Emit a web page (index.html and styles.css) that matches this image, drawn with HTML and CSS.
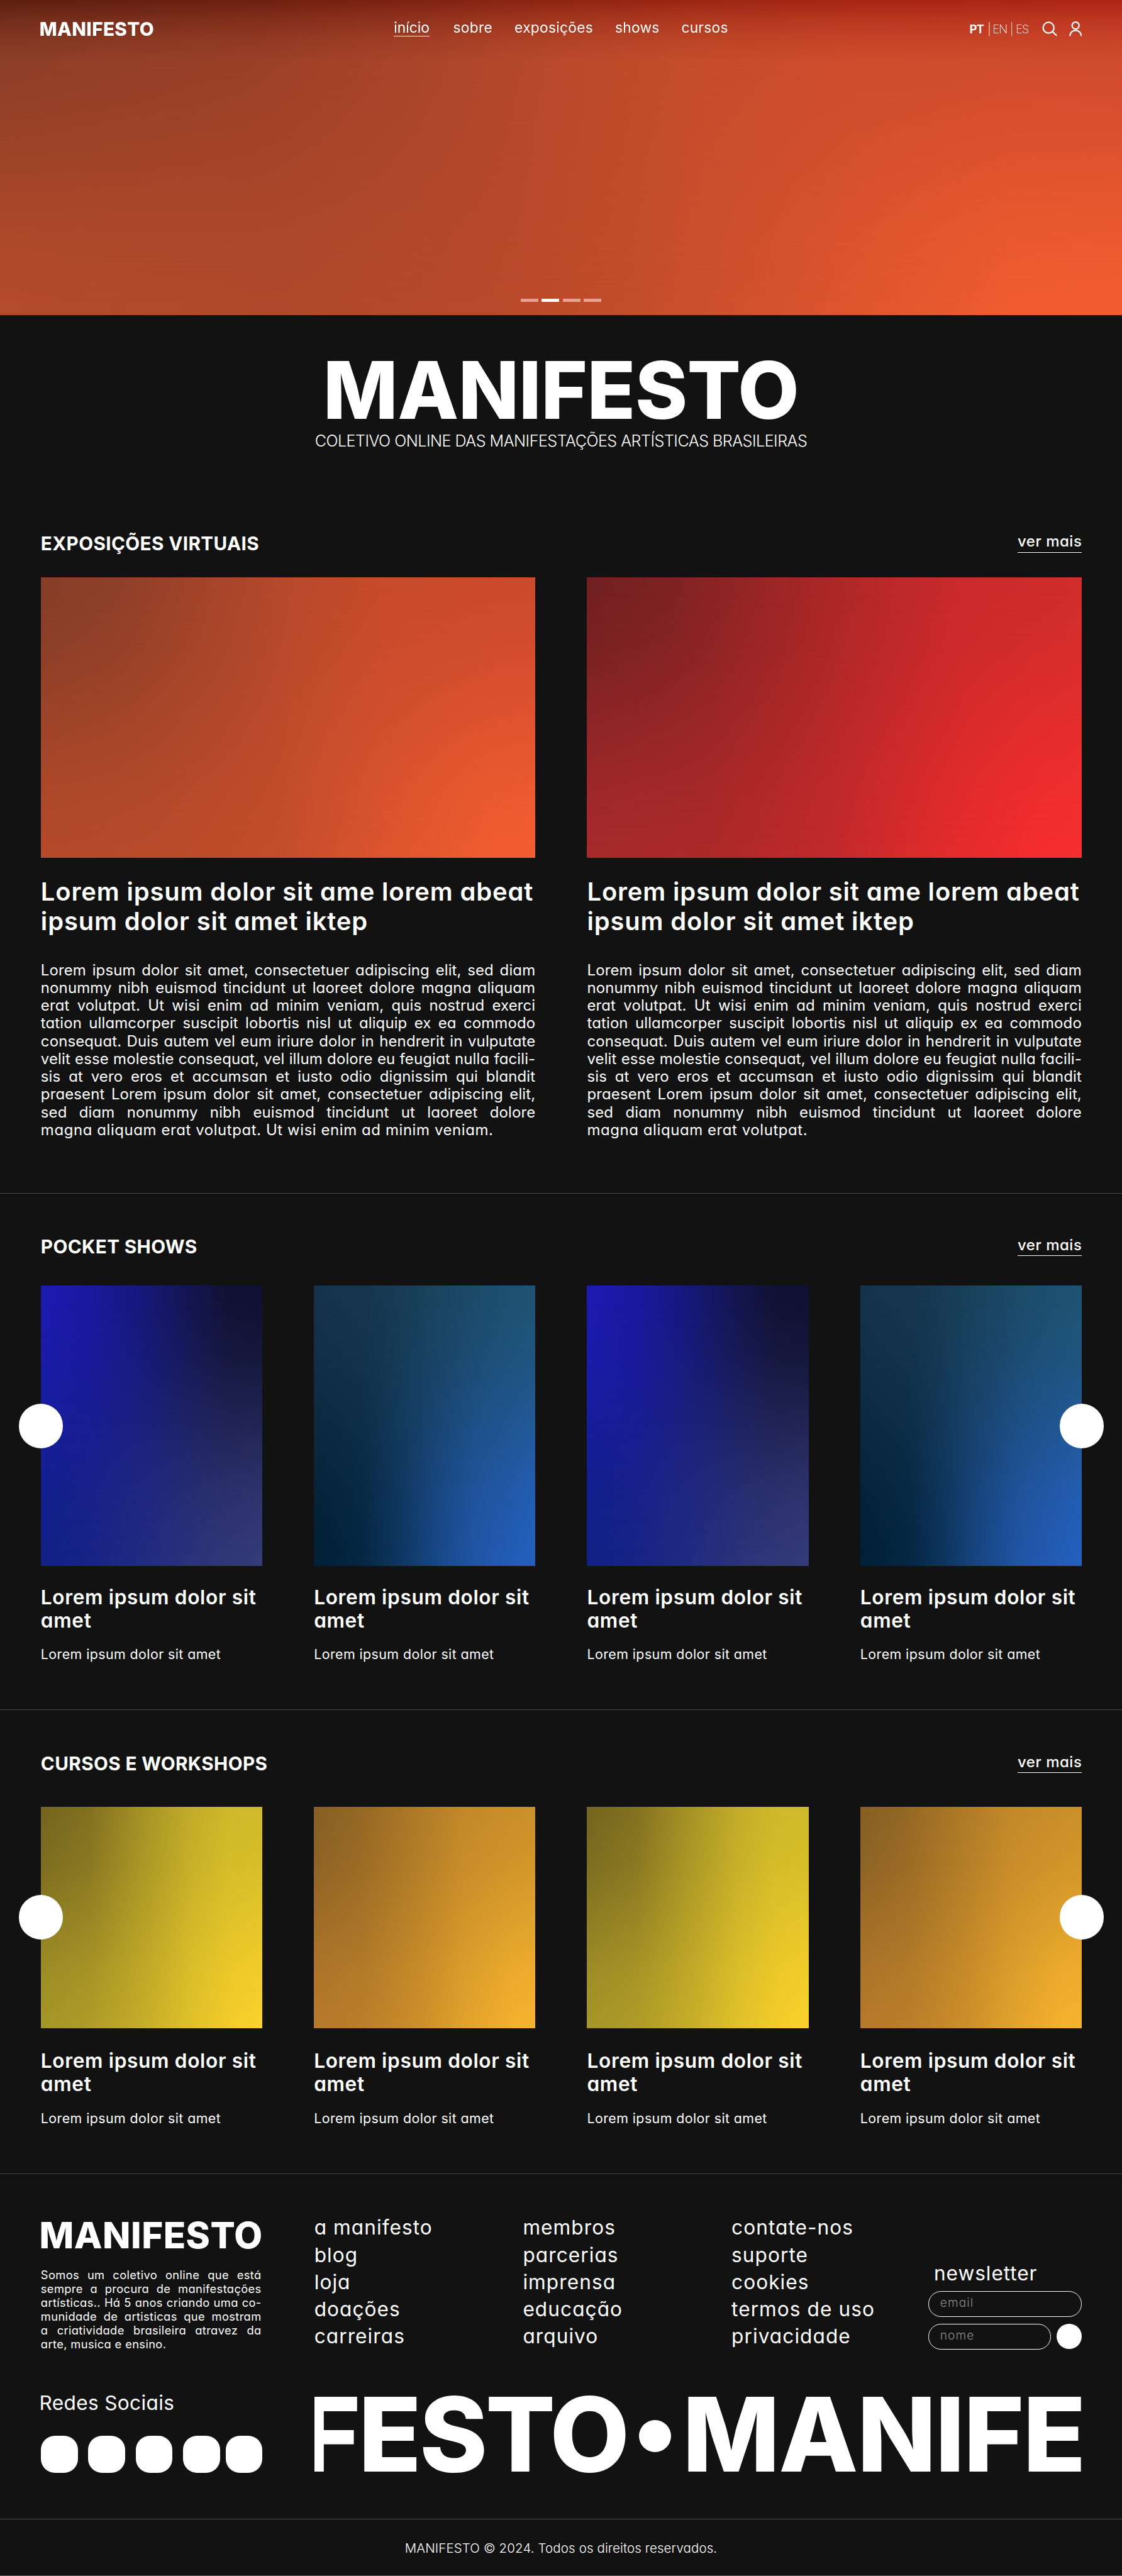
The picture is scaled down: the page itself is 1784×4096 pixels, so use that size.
FILE: index.html
```html
<!DOCTYPE html>
<html lang="pt-BR">
<head>
<meta charset="utf-8">
<title>MANIFESTO</title>
<link rel="stylesheet" href="styles.css">
</head>
<body>
<div class="hero mesh mesh-orange">
  <header class="topbar">
    <a class="logo">MANIFESTO</a>
    <nav class="menu">
      <a><span class="active">início</span></a><a>sobre</a><a>exposições</a><a>shows</a><a>cursos</a>
    </nav>
    <div class="lang"><b>PT</b><i>|</i><span>EN</span><i>|</i><span>ES</span></div>
    <svg class="icon" viewBox="0 0 26 26"><circle cx="11" cy="10.8" r="9.3"/><path d="M17.6 17.4 25 24.5"/></svg>
    <svg class="icon icon-user" viewBox="0 0 22 26"><circle cx="11" cy="7.1" r="6"/><path d="M1.6 25v-1a9.4 8.6 0 0 1 18.8 0v1"/></svg>
  </header>
  <div class="dots"><i></i><i class="on"></i><i></i><i></i></div>
</div>

<div class="intro">
  <h1>MANIFESTO</h1>
  <p>COLETIVO ONLINE DAS MANIFESTAÇÕES ARTÍSTICAS BRASILEIRAS</p>
</div>

<section class="section expo">
  <div class="head"><h2>EXPOSIÇÕES VIRTUAIS</h2><a class="more">ver mais</a></div>
  <div class="grid two">
    <article>
      <div class="media mesh mesh-orange-card"></div>
      <h3>Lorem ipsum dolor sit ame lorem abeat ipsum dolor sit amet iktep</h3>
      <p class="text"><span>Lorem ipsum dolor sit amet, consectetuer adipiscing elit, sed diam</span><span>nonummy nibh euismod tincidunt ut laoreet dolore magna aliquam</span><span>erat volutpat. Ut wisi enim ad minim veniam, quis nostrud exerci</span><span>tation ullamcorper suscipit lobortis nisl ut aliquip ex ea commodo</span><span>consequat. Duis autem vel eum iriure dolor in hendrerit in vulputate</span><span>velit esse molestie consequat, vel illum dolore eu feugiat nulla facili-</span><span>sis at vero eros et accumsan et iusto odio dignissim qui blandit</span><span>praesent Lorem ipsum dolor sit amet, consectetuer adipiscing elit,</span><span>sed diam nonummy nibh euismod tincidunt ut laoreet dolore</span><span>magna aliquam erat volutpat. Ut wisi enim ad minim veniam.</span></p>
    </article>
    <article>
      <div class="media mesh mesh-red"></div>
      <h3>Lorem ipsum dolor sit ame lorem abeat ipsum dolor sit amet iktep</h3>
      <p class="text"><span>Lorem ipsum dolor sit amet, consectetuer adipiscing elit, sed diam</span><span>nonummy nibh euismod tincidunt ut laoreet dolore magna aliquam</span><span>erat volutpat. Ut wisi enim ad minim veniam, quis nostrud exerci</span><span>tation ullamcorper suscipit lobortis nisl ut aliquip ex ea commodo</span><span>consequat. Duis autem vel eum iriure dolor in hendrerit in vulputate</span><span>velit esse molestie consequat, vel illum dolore eu feugiat nulla facili-</span><span>sis at vero eros et accumsan et iusto odio dignissim qui blandit</span><span>praesent Lorem ipsum dolor sit amet, consectetuer adipiscing elit,</span><span>sed diam nonummy nibh euismod tincidunt ut laoreet dolore</span><span>magna aliquam erat volutpat.</span></p>
    </article>
  </div>
</section>

<section class="section shows">
  <div class="head"><h2>POCKET SHOWS</h2><a class="more">ver mais</a></div>
  <div class="grid four">
    <article><div class="media mesh mesh-indigo"><button class="arrow prev"></button></div><h4>Lorem ipsum dolor sit amet</h4><p>Lorem ipsum dolor sit amet</p></article>
    <article><div class="media mesh mesh-teal"></div><h4>Lorem ipsum dolor sit amet</h4><p>Lorem ipsum dolor sit amet</p></article>
    <article><div class="media mesh mesh-indigo"></div><h4>Lorem ipsum dolor sit amet</h4><p>Lorem ipsum dolor sit amet</p></article>
    <article><div class="media mesh mesh-teal"><button class="arrow next"></button></div><h4>Lorem ipsum dolor sit amet</h4><p>Lorem ipsum dolor sit amet</p></article>
  </div>
</section>

<section class="section courses">
  <div class="head"><h2>CURSOS E WORKSHOPS</h2><a class="more">ver mais</a></div>
  <div class="grid four">
    <article><div class="media mesh mesh-yellow"><button class="arrow prev"></button></div><h4>Lorem ipsum dolor sit amet</h4><p>Lorem ipsum dolor sit amet</p></article>
    <article><div class="media mesh mesh-amber"></div><h4>Lorem ipsum dolor sit amet</h4><p>Lorem ipsum dolor sit amet</p></article>
    <article><div class="media mesh mesh-yellow"></div><h4>Lorem ipsum dolor sit amet</h4><p>Lorem ipsum dolor sit amet</p></article>
    <article><div class="media mesh mesh-amber"><button class="arrow next"></button></div><h4>Lorem ipsum dolor sit amet</h4><p>Lorem ipsum dolor sit amet</p></article>
  </div>
</section>

<footer>
  <div class="foot">
    <div class="about">
      <div class="brand">MANIFESTO</div>
      <p class="text"><span>Somos um coletivo online que está</span><span>sempre a procura de manifestações</span><span>artísticas.. Há 5 anos criando uma co-</span><span>munidade de artisticas que mostram</span><span>a criatividade brasileira atravez da</span><span>arte, musica e ensino.</span></p>
      <div class="social-title">Redes Sociais</div>
      <div class="social"><i></i><i></i><i></i><i></i><i></i></div>
    </div>
    <div class="site">
      <div class="links">
        <ul><li>a manifesto</li><li>blog</li><li>loja</li><li>doações</li><li>carreiras</li></ul>
        <ul><li>membros</li><li>parcerias</li><li>imprensa</li><li>educação</li><li>arquivo</li></ul>
        <ul><li>contate-nos</li><li>suporte</li><li>cookies</li><li>termos de uso</li><li>privacidade</li></ul>
        <form class="newsletter">
          <label>newsletter</label>
          <div class="field">email</div>
          <div class="row"><div class="field">nome</div><button type="button" class="send"></button></div>
        </form>
      </div>
      <div class="marquee"><span class="m1">FESTO</span><span class="bullet"></span><span class="m2">MANIFE</span></div>
    </div>
  </div>
  <div class="copy">MANIFESTO © 2024. Todos os direitos reservados.</div>
</footer>
</body>
</html>
```
FILE: styles.css
```css
/* 1rem = ten design pixels of the 1920px layout */
html { font-size: 9.29167px; background: #121212; }
* { box-sizing: border-box; margin: 0; padding: 0; }
body {
  width: 192rem; height: 4096px; overflow: hidden;
  color: #fff; background: #121212; border-bottom: 1px solid #5c5c5c;
  font-family: Inter, "Open Sans", sans-serif;
  font-feature-settings: "cv11";
}
i { font-style: normal; }
ul { list-style: none; }
button { border: 0; background: #fff; display: block; }

/* Four-corner gradients: the bottom row is the background, the top row fades over it */
.mesh { position: relative; background: var(--bottom); }
.mesh::before {
  content: ""; position: absolute; inset: 0; background: var(--top);
  -webkit-mask-image: linear-gradient(#000 4%, rgba(0,0,0,.84) 25%, rgba(0,0,0,.5) 50%, rgba(0,0,0,.16) 75%, transparent 96%);
  mask-image: linear-gradient(#000 4%, rgba(0,0,0,.84) 25%, rgba(0,0,0,.5) 50%, rgba(0,0,0,.16) 75%, transparent 96%);
}
.mesh-orange {
  --top: linear-gradient(90deg, #883d27, #973f27 22%, #a7442a 36%, #b94a2b 50%, #c44c2b 62%, #cc4b2c 76%, #cc492e);
  --bottom: linear-gradient(90deg, #b44b2a, #b0492b 25%, #b94a2a 46%, #c44d2b 57%, #da542e 73%, #f05c2f 90%, #f25d2f);
}
.mesh-orange-card {
  --top: linear-gradient(90deg, #853d27, #8d3f28 14%, #a3442a 33%, #b94a2b 52%, #c74a2b 70%, #cd492e);
  --bottom: linear-gradient(90deg, #b34a2a, #b74b2a 22%, #c34d2b 48%, #da542e 68%, #ef5c2f 90%, #f35d30);
}
.mesh-red {
  --top: linear-gradient(90deg, #712021, #7c2222 15%, #982525 35%, #b32828 55%, #ca2a2b 76%, #d02d2c);
  --bottom: linear-gradient(90deg, #a62a2b, #ac292a 25%, #c02a2b 48%, #de2b2c 70%, #f32d2d 90%, #f62f2f);
}
.mesh-indigo {
  --top: linear-gradient(90deg, #1c1ab0, #1a19a0 22%, #171880 42%, #13154f 68%, #101233 85%, #0e1130);
  --bottom: linear-gradient(90deg, #112187, #182485 25%, #222c80 50%, #2e3478 75%, #353a79);
}
.mesh-teal {
  --top: linear-gradient(90deg, #15324b, #16364e 25%, #19415c 50%, #1c4d6c 78%, #1f5372);
  --bottom: linear-gradient(90deg, #022035, #052742 22%, #0e355f 38%, #174684 54%, #2055a5 72%, #2460bf);
}
.mesh-yellow {
  --top: linear-gradient(90deg, #74651f, #827121 22%, #a49126 45%, #c2ac29 68%, #ceb929 85%, #cfba29);
  --bottom: linear-gradient(90deg, #a49528, #ae9b28 22%, #c7ae29 48%, #e0c12a 68%, #f4cd2a 88%, #f9d12b);
}
.mesh-amber {
  --top: linear-gradient(90deg, #865f24, #936725 20%, #ad7927 45%, #c2892a 68%, #cb9129);
  --bottom: linear-gradient(90deg, #b5792b, #b97e2a 22%, #cb8f2a 48%, #df9f2c 66%, #f2b02d 90%, #f5b22f);
}

.hero { height: 53.95rem; isolation: isolate; }
.hero::after {
  content: ""; position: absolute; left: 0; right: 0; top: 0; height: 10.6rem;
  background: linear-gradient(90deg, #ac7e66, #db7c70);
  mix-blend-mode: multiply;
  -webkit-mask-image: linear-gradient(#000, rgba(0,0,0,.55) 30%, rgba(0,0,0,.2) 65%, transparent);
  mask-image: linear-gradient(#000, rgba(0,0,0,.55) 30%, rgba(0,0,0,.2) 65%, transparent);
}
.topbar { position: relative; z-index: 2; display: flex; align-items: flex-start; padding: 3.47rem 6.85rem 0 6.75rem; }
.logo { width: 60.65rem; font-size: 3.2rem; line-height: 3.2rem; font-weight: 800; letter-spacing: .011em; }
.menu { display: grid; grid-template-columns: 10.15rem 10.5rem 17.2rem 11.35rem 10rem; margin-top: .06rem; font-size: 2.45rem; line-height: 2.4rem; letter-spacing: .012em; }
.active { display: inline-block; padding-bottom: .2rem; border-bottom: .15rem solid #fff; letter-spacing: 0; }
.lang { display: grid; grid-template-columns: 3.1rem .85rem 3rem .95rem 4.55rem; margin: .56rem 0 0 auto; font-size: 2rem; line-height: 2rem; font-weight: 200; letter-spacing: -.06em; }
.lang b { font-weight: 700; }
.icon { width: 2.6rem; height: 2.6rem; margin-top: .23rem; fill: none; stroke: #fff; stroke-width: 2.4; }
.icon-user { width: 2.2rem; margin-left: 2rem; }
.dots { position: absolute; z-index: 2; left: 0; right: 0; bottom: 2.25rem; display: flex; justify-content: center; gap: .6rem; }
.dots i { width: 3rem; height: .6rem; background: rgba(255,255,255,.5); }
.dots .on { background: #fff; }

.intro { padding-top: 6.0rem; text-align: center; }
.intro h1 { font-size: 13.57rem; line-height: 13.57rem; font-weight: 800; letter-spacing: -.004em; }
.intro p { margin-top: .55rem; font-size: 2.7rem; line-height: 3rem; font-weight: 300; letter-spacing: -.02em; }

.section { padding-left: 6.98rem; padding-right: 6.9rem; border-bottom: .15rem solid #464646; }
.head { display: flex; justify-content: space-between; height: 3.2rem; }
h2 { font-size: 3.2rem; line-height: 3.2rem; font-weight: 750; letter-spacing: .012em; padding-top: .06rem; }
.more { align-self: flex-start; flex: none; font-size: 2.58rem; line-height: 2.6rem; font-weight: 500; letter-spacing: .022em; margin-right: -.05rem; padding-bottom: .45rem; border-bottom: .15rem solid #fff; }
.grid { display: grid; column-gap: 8.85rem; }
.two { grid-template-columns: repeat(2, minmax(0, 1fr)); }
.four { grid-template-columns: repeat(4, minmax(0, 1fr)); }
h3 { font-size: 4.3rem; line-height: 5.05rem; font-weight: 600; letter-spacing: .021em; margin: 3.35rem -1rem 0 0; }
h4 { font-size: 3.4rem; line-height: 4rem; font-weight: 600; letter-spacing: .021em; }
.text span { display: block; white-space: nowrap; text-align-last: justify; }
.text span:last-child { text-align-last: left; }

.expo { padding-top: 14.35rem; padding-bottom: 9.27rem; }
.expo .grid { margin-top: 4.13rem; }
.expo .media { height: 48.02rem; }
.expo .text { margin-top: 4.29rem; font-size: 2.58rem; line-height: 3.04rem; letter-spacing: .005em; }
.expo .text span:last-child { letter-spacing: .024em; }

.four p { font-size: 2.3rem; line-height: 2.7rem; letter-spacing: .02em; margin-top: 2.5rem; }
.shows { padding-top: 7.51rem; padding-bottom: 8.04rem; }
.shows .grid { margin-top: 5.04rem; }
.shows .media { height: 47.99rem; margin-bottom: 3.25rem; }
.courses { padding-top: 7.6rem; padding-bottom: 8.07rem; }
.courses .grid { margin-top: 5.75rem; }
.courses .media { height: 37.9rem; margin-bottom: 3.52rem; }
.courses p { margin-top: 2.56rem; }
.arrow { position: absolute; top: calc(50% - 3.8rem); width: 7.6rem; height: 7.6rem; border-radius: 50%; }
.prev { left: -3.8rem; }
.next { right: -3.8rem; }

.foot { display: flex; gap: 8.9rem; padding: 6.86rem 6.9rem 0 6.98rem; height: 59rem; }
.about { width: 37.9rem; flex: none; padding-top: .53rem; }
.brand { font-size: 6.26rem; line-height: 6.26rem; font-weight: 800; letter-spacing: .008em; margin-left: -.25rem; white-space: nowrap; }
.about .text { margin-top: 2.5rem; width: 37.75rem; font-size: 1.97rem; line-height: 2.363rem; letter-spacing: .02em; }
.social-title { margin-top: 6.82rem; font-size: 3.4rem; line-height: 4rem; letter-spacing: .011em; margin-left: -.25rem; }
.social { display: flex; gap: 1.8rem; margin-top: 3.66rem; }
.social i { width: 6.32rem; height: 6.32rem; border-radius: 2.4rem; background: #fff; flex: none; }
.social i:last-child { margin-left: -.85rem; }
.site { flex: 1; min-width: 0; }
.links { display: grid; grid-template-columns: 35.7rem 35.7rem 33.65rem 26.25rem; font-size: 3.4rem; letter-spacing: .034em; }
.links li { line-height: 4.65rem; white-space: nowrap; }
.newsletter { padding-top: 8.1rem; }
.newsletter label { display: block; line-height: 4rem; margin: 0 0 1.1rem 1rem; letter-spacing: .03em; }
.field { flex: 1; height: 4.36rem; border: .17rem solid #fff; border-radius: 2.18rem; padding-left: 1.95rem; font-size: 2.05rem; line-height: 3.9rem; font-weight: 300; color: #8b8b8b; }
.row { display: flex; gap: 1rem; margin-top: 1.25rem; }
.send { width: 4.28rem; height: 4.28rem; border-radius: 50%; }
.marquee { display: flex; justify-content: flex-end; align-items: center; height: 13.6rem; margin-top: 7.65rem; overflow: hidden; font-size: 17.66rem; line-height: 13.6rem; font-weight: 800; }
.m1 { letter-spacing: -.02em; }
.m2 { letter-spacing: -.01em; margin-right: -.55rem; }
.bullet { flex: none; width: 5.55rem; height: 5.55rem; border-radius: 50%; background: #fff; margin: .6rem 1.95rem 0 1.9rem; }
.copy { border-top: .15rem solid #484848; padding-top: 3.72rem; text-align: center; font-size: 2.2rem; line-height: 2.6rem; font-weight: 300; letter-spacing: .007em; }
```
